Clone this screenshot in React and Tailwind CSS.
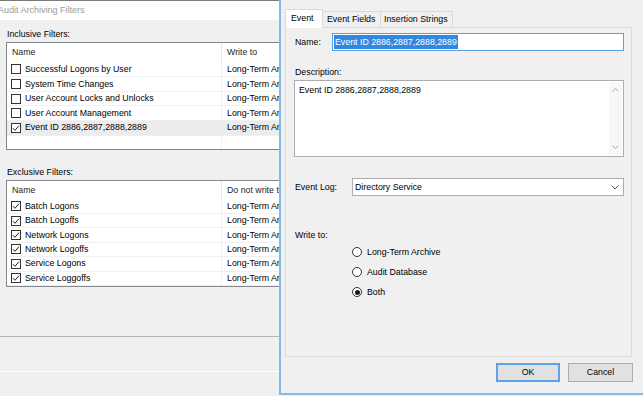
import React from 'react'

const inclusive = [
  { name: 'Successful Logons by User', on: false },
  { name: 'System Time Changes', on: false },
  { name: 'User Account Locks and Unlocks', on: false },
  { name: 'User Account Management', on: false },
  { name: 'Event ID 2886,2887,2888,2889', on: true, sel: true },
]

const exclusive = [
  'Batch Logons',
  'Batch Logoffs',
  'Network Logons',
  'Network Logoffs',
  'Service Logons',
  'Service Loggoffs',
]

function Check({ on }) {
  return (
    <span className="w-[10px] h-[10px] border border-[#333333] bg-white flex items-center justify-center shrink-0">
      {on && (
        <svg width="8" height="8" viewBox="0 0 8 8">
          <path d="M1 4.2 L3 6.3 L7 1.6" fill="none" stroke="#222222" strokeWidth="1" />
        </svg>
      )}
    </span>
  )
}

function Row({ name, on, sel }) {
  return (
    <div className={sel ? 'flex h-[14.6px] items-center border-b border-[#f0f0f0] bg-[#ececec]' : 'flex h-[14.6px] items-center border-b border-[#f0f0f0]'}>
      <div className="w-[215px] h-full flex items-center gap-[4px] pl-[4px] border-r border-[#f0f0f0] shrink-0">
        <Check on={on} />
        <span className="whitespace-nowrap">{name}</span>
      </div>
      <div className="pl-[5px] whitespace-nowrap">Long-Term Archive</div>
    </div>
  )
}

function Header({ col2, tall }) {
  return (
    <div className={tall ? 'flex h-[19.7px] items-center' : 'flex h-[18.7px] items-center'}>
      <div className="w-[215px] h-full flex items-center pl-[5px] border-r border-[#e5e5e5] shrink-0 text-[#1e1e1e]">Name</div>
      <div className="pl-[5px] whitespace-nowrap text-[#1e1e1e]">{col2}</div>
    </div>
  )
}

function Radio({ on, label }) {
  return (
    <div className="h-[20px] flex items-center gap-[5px] pl-[66px]">
      <span className="w-[10px] h-[10px] rounded-full border border-[#333333] bg-white flex items-center justify-center">
        {on && <span className="w-[5px] h-[5px] rounded-full bg-[#1a1a1a]" />}
      </span>
      <span>{label}</span>
    </div>
  )
}

export default function App() {
  return (
    <div className="w-[643px] h-[396px] overflow-hidden flex bg-[#f0f0f0] text-[8.8px] leading-none text-black font-['Liberation_Sans',Arial,sans-serif]">
      {/* background window */}
      <div className="w-[279px] h-full shrink-0 overflow-hidden flex flex-col">
        <div className="h-[1px] bg-[#7a7a7a]" />
        <div className="h-[19px] bg-white flex items-center text-[9px] text-[#9c9c9c]">
          <span className="-ml-[2px] whitespace-nowrap">Audit Archiving Filters</span>
        </div>

        <div className="mt-[8px] h-[12px] flex items-center pl-[7px]">Inclusive Filters:</div>
        <div className="mt-[2px] ml-[6px] w-[300px] h-[108px] border border-[#828790] bg-white flex flex-col overflow-hidden shrink-0">
          <Header col2="Write to" tall />
          {inclusive.map((r) => (
            <Row key={r.name} {...r} />
          ))}
          <div className="flex-1 flex">
            <div className="w-[215px] border-r border-[#f0f0f0]" />
          </div>
        </div>

        <div className="mt-[16px] h-[12px] flex items-center pl-[7px]">Exclusive Filters:</div>
        <div className="mt-[2px] ml-[6px] w-[300px] h-[107px] border border-[#828790] bg-white flex flex-col overflow-hidden shrink-0">
          <Header col2="Do not write to" />
          {exclusive.map((n) => (
            <Row key={n} name={n} on />
          ))}
        </div>

        <div className="mt-[49px] h-[1px] bg-[#b4b4b4] shrink-0" />
        <div className="mt-[34px] h-[1px] bg-white shrink-0" />
      </div>

      {/* edit filter dialog */}
      <div className="w-[364px] h-[395px] shrink-0 border-l-2 border-b-2 border-[#84b9ea] bg-[#f0f0f0] flex flex-col pt-[9px] pl-[4px]">
        <div className="h-[18px] flex items-end">
          <div className="relative z-10 h-[19px] -mb-[1px] w-[38px] bg-white border border-b-0 border-[#d9d9d9] flex items-start pt-[4px] pl-[5px]">
            Event
          </div>
          <div className="h-[16px] w-[58px] border-t border-r border-[#d9d9d9] bg-[#f0f0f0] flex items-center pl-[4px] whitespace-nowrap">
            Event Fields
          </div>
          <div className="h-[16px] w-[72px] border-t border-r border-[#d9d9d9] bg-[#f0f0f0] flex items-center pl-[3px] whitespace-nowrap">
            Insertion Strings
          </div>
        </div>

        <div className="w-[347px] h-[330px] border border-[#dadada] bg-[#f0f0f0] flex flex-col">
          <div className="mt-[5px] flex items-center pl-[9px]">
            <span className="w-[37px]">Name:</span>
            <div className="w-[292px] h-[18px] border border-[#5a9fe6] bg-white flex items-center pl-[1px]">
              <span className="bg-[#3088e0] text-white h-[14px] flex items-center px-[1px] whitespace-nowrap">
                Event ID 2886,2887,2888,2889
              </span>
            </div>
          </div>

          <div className="mt-[15px] h-[12px] flex items-center pl-[9px]">Description:</div>
          <div className="mt-[2px] ml-[8px] w-[330px] h-[77px] border border-[#adadad] bg-white flex">
            <div className="flex-1 pl-[4px] pt-[5px]">Event ID 2886,2887,2888,2889</div>
            <div className="w-[13px] my-[1px] mr-[1px] bg-[#f7f7f7] flex flex-col items-center justify-between py-[6px]">
              <svg width="7" height="4" viewBox="0 0 7 4">
                <path d="M0.5 3.5 L3.5 0.5 L6.5 3.5" fill="none" stroke="#a6a6a6" strokeWidth="1" />
              </svg>
              <svg width="7" height="4" viewBox="0 0 7 4">
                <path d="M0.5 0.5 L3.5 3.5 L6.5 0.5" fill="none" stroke="#a6a6a6" strokeWidth="1" />
              </svg>
            </div>
          </div>

          <div className="mt-[21px] flex items-center pl-[9px]">
            <span className="w-[57px]">Event Log:</span>
            <div className="w-[272px] h-[18px] border border-[#adadad] bg-white flex items-center justify-between pl-[2px] pr-[4px]">
              <span>Directory Service</span>
              <svg width="8" height="5" viewBox="0 0 8 5">
                <path d="M0.5 0.5 L4 4 L7.5 0.5" fill="none" stroke="#555555" strokeWidth="1" />
              </svg>
            </div>
          </div>

          <div className="mt-[33px] h-[12px] flex items-center pl-[9px]">Write to:</div>
          <div className="mt-[1px] flex flex-col">
            <Radio label="Long-Term Archive" />
            <Radio label="Audit Database" />
            <Radio label="Both" on />
          </div>
        </div>

        <div className="mt-[6px] w-[348px] flex justify-end gap-[8px]">
          <button className="w-[64px] h-[19px] border-2 border-[#5fa2e6] bg-[#e1e1e1] flex items-center justify-center">
            OK
          </button>
          <button className="w-[65px] h-[19px] border border-[#adadad] bg-[#e1e1e1] flex items-center justify-center">
            Cancel
          </button>
        </div>
      </div>
    </div>
  )
}
